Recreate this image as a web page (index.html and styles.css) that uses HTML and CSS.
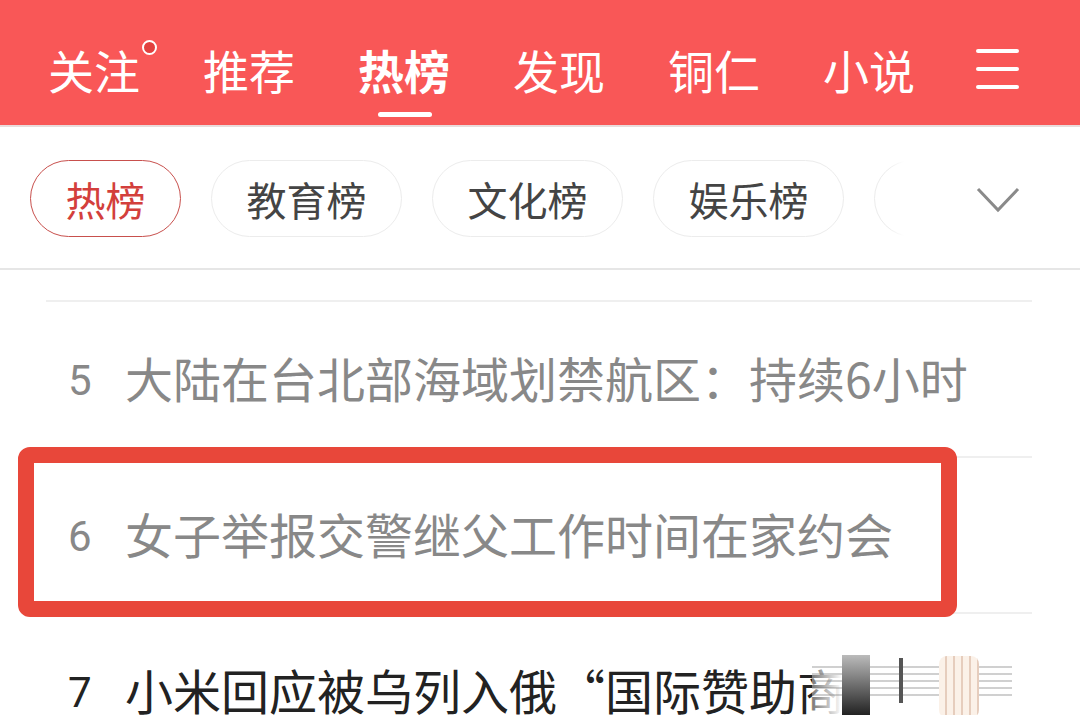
FILE: index.html
```html
<!DOCTYPE html>
<html lang="zh-CN">
<head>
    <meta charset="UTF-8">
    <meta name="viewport" content="width=device-width, initial-scale=1.0">
    <title>热榜</title>
    <link rel="stylesheet" href="styles.css">
</head>
<body>

    <!-- 顶部导航 -->
    <header class="topbar">
        <span class="nav-item">关注<i class="nav-dot"></i></span>
        <span class="nav-item">推荐</span>
        <span class="nav-item active">热榜</span>
        <span class="nav-item">发现</span>
        <span class="nav-item">铜仁</span>
        <span class="nav-item">小说</span>
        <span class="nav-menu"><i></i><i></i><i></i></span>
    </header>

    <!-- 榜单分类 -->
    <div class="chip-bar">
        <div class="chips">
            <span class="chip active">热榜</span>
            <span class="chip">教育榜</span>
            <span class="chip">文化榜</span>
            <span class="chip">娱乐榜</span>
            <span class="chip">体育榜</span>
        </div>
        <div class="chip-more">
            <svg width="44" height="26" viewBox="0 0 44 26">
                <polyline points="2,2 22,23 42,2" fill="none" stroke="#8a8a8a" stroke-width="3"/>
            </svg>
        </div>
    </div>

    <!-- 热榜列表 -->
    <ul class="rank-list">
        <li class="rank-row spacer"></li>
        <li class="rank-row read"><span class="rank-num">5</span><span class="rank-title">大陆在台北部海域划禁航区：持续6小时</span></li>
        <li class="rank-row read"><span class="rank-num">6</span><span class="rank-title">女子举报交警继父工作时间在家约会</span></li>
        <li class="rank-row"><span class="rank-num">7</span><span class="rank-title">小米回应被乌列入俄“国际赞助商”名单</span></li>
    </ul>

    <!-- 截图标注 -->
    <div class="mark-box"></div>
    <div class="smear">
        <div class="smear-lines"></div>
        <div class="smear-block"></div>
        <div class="smear-bar"></div>
        <div class="smear-pill"></div>
    </div>

</body>
</html>
```

FILE: styles.css
```css
/* 基础 */
body {
    margin: 0;
    width: 1080px;
    height: 715px;
    overflow: hidden;
    position: relative;
    background: #fff;
    font-family: "Noto Sans CJK SC", "Noto Sans", sans-serif;
}

/* 顶部导航 */
.topbar {
    height: 127px;
    box-sizing: border-box;
    padding: 12px 0 0 48px;
    display: flex;
    align-items: center;
    gap: 63px;
    background-color: #f95757;
    border-bottom: 2px solid #e9dcdc;
}
.nav-item {
    position: relative;
    font-size: 46px;
    line-height: 1;
    color: #fff;
    white-space: nowrap;
}
.nav-item.active {
    font-weight: bold;
}
.nav-item.active::after {
    content: "";
    position: absolute;
    left: 20px;
    right: 18px;
    bottom: -25px;
    height: 5px;
    border-radius: 3px;
    background: #fff;
}
.nav-dot {
    position: absolute;
    right: -17px;
    top: -6px;
    width: 11px;
    height: 11px;
    border: 2.5px solid #fff;
    border-radius: 50%;
    background: #e2403f;
}
.nav-menu {
    display: flex;
    flex-direction: column;
    gap: 14px;
    width: 43px;
    margin-left: -2px;
}
.nav-menu i {
    display: block;
    height: 4px;
    border-radius: 2px;
    background: #fff;
}

/* 榜单分类 */
.chip-bar {
    position: relative;
    height: 143px;
    box-sizing: border-box;
    padding: 33px 0 0 30px;
    border-bottom: 2px solid #e6e6e6;
}
.chips {
    display: flex;
    gap: 30px;
    white-space: nowrap;
}
.chip {
    height: 77px;
    box-sizing: border-box;
    padding: 0 34.5px;
    display: flex;
    align-items: center;
    font-size: 40px;
    color: #444;
    border: 1.5px solid #ececec;
    border-radius: 39px;
}
.chip.active {
    color: #d33f3c;
    border-color: #c8504d;
}
.chip-more {
    position: absolute;
    top: 0;
    right: 0;
    bottom: 0;
    width: 192px;
    display: flex;
    align-items: center;
    justify-content: flex-end;
    padding-right: 62px;
    box-sizing: border-box;
    background: linear-gradient(to right, rgba(255,255,255,0) 0, #fff 16px);
}
.chip-more svg {
    margin-right: -2px;
    margin-top: 4px;
}

/* 热榜列表 */
.rank-list {
    list-style: none;
    margin: 0 48px 0 46px;
    padding: 0;
}
.rank-row {
    height: 156px;
    box-sizing: border-box;
    padding: 0 0 4px 22px;
    display: flex;
    align-items: center;
    border-bottom: 2px solid #efefef;
    color: #222;
    white-space: nowrap;
}
.rank-row.spacer {
    height: 32px;
}
.rank-row.read {
    color: #888;
}
.rank-num {
    width: 57px;
    padding-top: 6px;
    font-family: Roboto, "Noto Sans", sans-serif;
    font-size: 42px;
}
.rank-title {
    font-size: 48px;
}

/* 截图上的红框 */
.mark-box {
    position: absolute;
    left: 18px;
    top: 447px;
    width: 939px;
    height: 170px;
    box-sizing: border-box;
    border: 16px solid #e8473a;
    border-radius: 12px;
}

/* 第7条末尾的模糊痕迹 */
.smear {
    position: absolute;
    left: 812px;
    top: 648px;
    width: 268px;
    height: 67px;
    background: linear-gradient(to right, rgba(255,255,255,0.4), #fff 30px);
}
.smear-lines {
    position: absolute;
    left: 0;
    top: 18px;
    width: 200px;
    height: 30px;
    background: repeating-linear-gradient(to bottom, rgba(120,120,120,0.35) 0 2px, rgba(255,255,255,0) 2px 7px);
}
.smear-block {
    position: absolute;
    left: 30px;
    top: 7px;
    width: 28px;
    height: 60px;
    background: linear-gradient(to bottom, #bbb, #222);
}
.smear-bar {
    position: absolute;
    left: 87px;
    top: 10px;
    width: 4px;
    height: 45px;
    background: #555;
}
.smear-pill {
    position: absolute;
    left: 127px;
    top: 8px;
    width: 40px;
    height: 62px;
    border-radius: 8px;
    background: repeating-linear-gradient(to right, #fbf1e8 0 6px, #e6cdbd 6px 8px);
}
```
